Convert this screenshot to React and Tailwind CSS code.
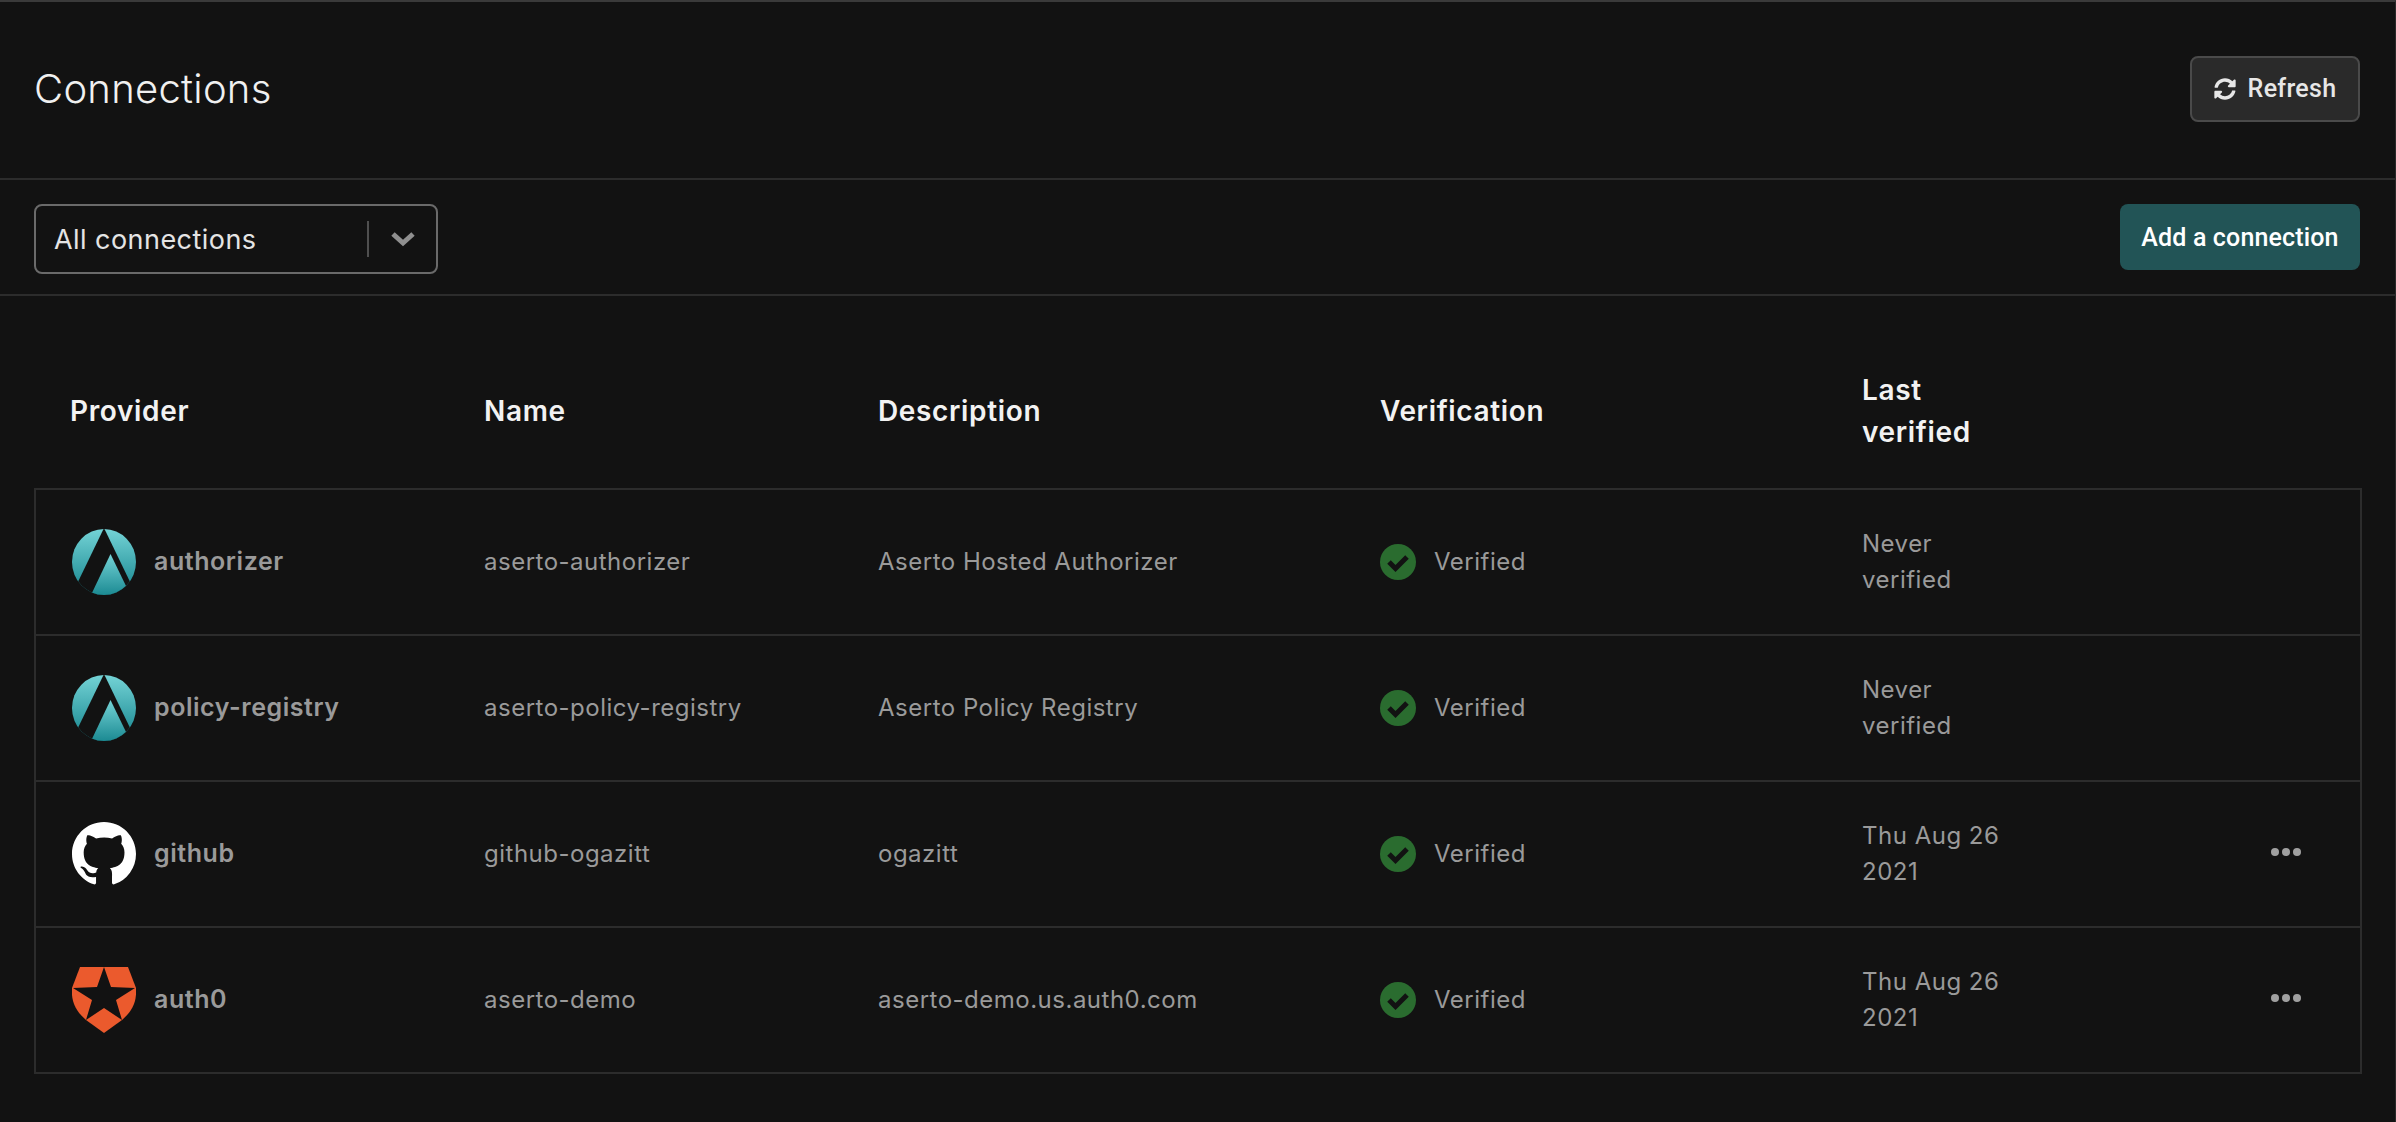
import React from "react";

const Aserto = ({ id }) => (
  <svg width="64" height="66" viewBox="0 0 64 66" className="shrink-0">
    <defs>
      <linearGradient id={id} x1="0" y1="0" x2="0" y2="1" gradientUnits="objectBoundingBox">
        <stop offset="0" stopColor="#74d3d6" />
        <stop offset="1" stopColor="#13838c" />
      </linearGradient>
      <clipPath id={`${id}c`}>
        <ellipse cx="32" cy="33" rx="32" ry="33" />
      </clipPath>
    </defs>
    <g clipPath={`url(#${id}c)`}>
      <rect width="64" height="66" fill={`url(#${id})`} />
      <path d="M32 -1 L-12 90 H76 Z" fill="#121212" />
      <path d="M38.5 25 L54 57 L54 70 H19 L19 66 Z" fill={`url(#${id})`} />
    </g>
  </svg>
);

const Github = () => (
  <svg width="64" height="64" viewBox="0 0 16 16" className="shrink-0">
    <path
      fill="#ffffff"
      fillRule="evenodd"
      d="M8 0C3.58 0 0 3.58 0 8c0 3.54 2.29 6.53 5.47 7.59.4.07.55-.17.55-.38 0-.19-.01-.82-.01-1.49-2.01.37-2.53-.49-2.69-.94-.09-.23-.48-.94-.82-1.13-.28-.15-.68-.52-.01-.53.63-.01 1.08.58 1.23.82.72 1.21 1.87.87 2.33.66.07-.52.28-.87.51-1.07-1.78-.2-3.64-.89-3.64-3.95 0-.87.31-1.59.82-2.15-.08-.2-.36-1.02.08-2.12 0 0 .67-.21 2.2.82.64-.18 1.32-.27 2-.27.68 0 1.36.09 2 .27 1.53-1.04 2.2-.82 2.2-.82.44 1.1.16 1.92.08 2.12.51.56.82 1.27.82 2.15 0 3.07-1.87 3.75-3.65 3.95.29.25.54.73.54 1.48 0 1.07-.01 1.93-.01 2.2 0 .21.15.46.55.38A8.013 8.013 0 0016 8c0-4.42-3.58-8-8-8z"
    />
  </svg>
);

const Auth0 = () => (
  <svg width="64" height="66" viewBox="0 0 64 66" className="shrink-0">
    <path d="M8 0 H56 L64 21 C65 35 60 44 50 53 L32 66 L14 53 C4 44 -1 35 0 21 Z" fill="#eb5a2d" />
    <path d="M32 0 L39 20 L63 21 L44 33 L50 53 L32 41 L14 53 L20 33 L1 21 L25 20 Z" fill="#121212" />
  </svg>
);

const Check = () => (
  <svg width="36" height="36" viewBox="0 0 36 36" className="shrink-0">
    <circle cx="18" cy="18" r="18" fill="#2a6c2f" />
    <path d="M9 18 L15.5 24.5 L27 13" fill="none" stroke="#121212" strokeWidth="5" />
  </svg>
);

const Dots = () => (
  <svg width="32" height="10" viewBox="0 0 32 10">
    <circle cx="5" cy="5" r="4" fill="#a0a0a0" />
    <circle cx="16" cy="5" r="4" fill="#a0a0a0" />
    <circle cx="27" cy="5" r="4" fill="#a0a0a0" />
  </svg>
);

const rows = [
  { logo: <Aserto id="a1" />, p: "authorizer", n: "aserto-authorizer", d: "Aserto Hosted Authorizer", l: ["Never", "verified"] },
  { logo: <Aserto id="a2" />, p: "policy-registry", n: "aserto-policy-registry", d: "Aserto Policy Registry", l: ["Never", "verified"] },
  { logo: <Github />, p: "github", n: "github-ogazitt", d: "ogazitt", l: ["Thu Aug 26", "2021"], menu: true },
  { logo: <Auth0 />, p: "auth0", n: "aserto-demo", d: "aserto-demo.us.auth0.com", l: ["Thu Aug 26", "2021"], menu: true },
];

const headGrid = "grid grid-cols-[414px_394px_502px_482px_1fr_auto] items-center";
const rowGrid = "grid grid-cols-[410px_394px_502px_482px_1fr_auto] items-center";

export default function App() {
  return (
    <div className="w-[2396px] h-[1122px] overflow-hidden bg-[#121212] border-t-2 border-t-[#3a3a3a] border-r border-r-[#2a2a2a] font-['Inter',sans-serif]">
      <div className="h-[178px] flex items-center justify-between pl-[34px] pr-[35px] border-b-2 border-[#2c2c2c]">
        <h1 className="text-[40px] leading-[48px] tracking-[0.27px] font-light text-[#f0f0f0] -mt-[2px]">Connections</h1>
        <button className="w-[170px] h-[66px] flex items-center justify-center gap-[12px] rounded-[8px] border-2 border-[#4a4a4a] bg-[#2a2a2a] text-[#e7e7e7] text-[25px] tracking-[0.3px] font-medium font-['Roboto',sans-serif] -mt-[2px]">
          <svg width="22" height="22" viewBox="0 0 512 512" fill="#e7e7e7">
            <path d="M370.72 133.28C339.458 104.008 298.888 87.962 255.848 88c-77.458.068-144.328 53.178-162.791 126.85-1.344 5.363-6.122 9.15-11.651 9.15H24.103c-7.498 0-13.194-6.807-11.807-14.176C33.933 94.924 134.813 8 256 8c66.448 0 126.791 26.136 171.315 68.685L463.03 40.97C478.149 25.851 504 36.559 504 57.941V192c0 13.255-10.745 24-24 24H345.941c-21.382 0-32.09-25.851-16.971-40.971l41.75-41.749zM32 296h134.059c21.382 0 32.09 25.851 16.971 40.971l-41.75 41.75c31.262 29.273 71.835 45.319 114.876 45.28 77.418-.07 144.315-53.144 162.787-126.849 1.344-5.363 6.122-9.15 11.651-9.15h57.304c7.498 0 13.194 6.807 11.807 14.176C478.067 417.076 377.187 504 256 504c-66.448 0-126.791-26.136-171.315-68.685L48.97 471.03C33.851 486.149 8 475.441 8 454.059V320c0-13.255 10.745-24 24-24z" />
          </svg>
          Refresh
        </button>
      </div>

      <div className="h-[116px] flex items-center justify-between pl-[34px] pr-[35px] border-b-2 border-[#2c2c2c]">
        <div className="w-[404px] h-[70px] flex items-center rounded-[8px] border-2 border-[#6a6a6a] mt-[4px]">
          <span className="flex-1 pl-[18px] pt-[3px] text-[27px] tracking-[0.45px] text-[#e4e4e4]">All connections</span>
          <span className="w-[2px] h-[36px] bg-[#4f4f4f]" />
          <span className="w-[67px] flex justify-center">
            <svg width="24" height="16" viewBox="0 0 24 16" fill="none" stroke="#8f8f8f" strokeWidth="5">
              <path d="M2 3 L12 12 L22 3" />
            </svg>
          </span>
        </div>
        <button className="w-[240px] h-[66px] pt-[2px] rounded-[8px] bg-[#225456] text-white text-[25px] tracking-[0.15px] font-medium font-['Roboto',sans-serif]">
          Add a connection
        </button>
      </div>

      <div className="pl-[34px] pr-[33px]">
        <div className={`${headGrid} h-[192px] pt-[38px] pl-[36px] pr-[56px] text-[28px] tracking-[0.65px] font-semibold text-[#f2f2f2] leading-[42px]`}>
          <div>Provider</div>
          <div>Name</div>
          <div>Description</div>
          <div>Verification</div>
          <div>
            Last
            <br />
            verified
          </div>
          <div className="w-[32px]" />
        </div>
        <div className="border-2 border-[#2c2c2c] border-b-0">
          {rows.map((r) => (
            <div key={r.p} className={`${rowGrid} h-[146px] pl-[36px] pr-[58px] border-b-2 border-[#2c2c2c] text-[24px] tracking-[0.5px] text-[#9a9a9a]`}>
              <div className="flex items-center gap-[18px]">
                {r.logo}
                <span className="text-[25px] tracking-[0.55px] font-semibold">{r.p}</span>
              </div>
              <div className="pl-[2px]">{r.n}</div>
              <div className="pl-[2px]">{r.d}</div>
              <div className="pl-[2px] flex items-center gap-[18px]">
                <Check />
                <span>Verified</span>
              </div>
              <div className="pl-[2px] leading-[36px]">
                {r.l[0]}
                <br />
                {r.l[1]}
              </div>
              <div className="w-[32px] flex -mt-[5px]">{r.menu ? <Dots /> : null}</div>
            </div>
          ))}
        </div>
      </div>
    </div>
  );
}
